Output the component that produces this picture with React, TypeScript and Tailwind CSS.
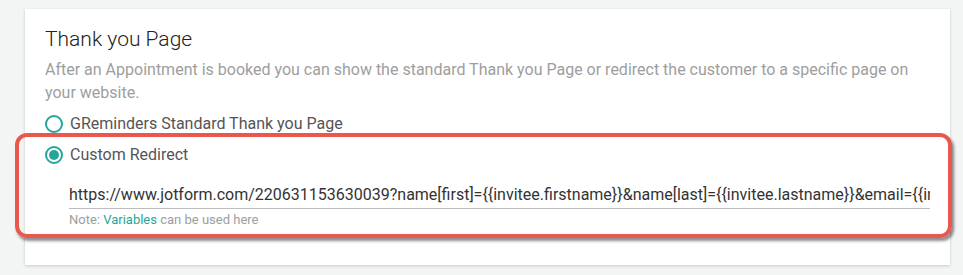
const url =
  "https://www.jotform.com/220631153630039?name[first]={{invitee.firstname}}&name[last]={{invitee.lastname}}&email={{invitee.email}}";

function Radio({ checked, label }: { checked: boolean; label: string }) {
  return (
    <label className="flex h-[22px] items-center gap-[7px]">
      <span className="flex h-[18px] w-[18px] items-center justify-center rounded-full border-2 border-[#26a69a]">
        {checked && <span className="h-[10px] w-[10px] rounded-full bg-[#26a69a]" />}
      </span>
      <span className="text-[16px] leading-[22px] text-[#555]">{label}</span>
    </label>
  );
}

export default function App() {
  return (
    <div
      className="relative h-[275px] w-[963px] overflow-hidden bg-[#f3f4f4] pl-[25px] pt-[9px]"
      style={{ fontFamily: "Roboto, 'Liberation Sans', sans-serif" }}
    >
      <div className="h-[256px] w-[925px] bg-white pl-[20px] pr-[20px] pt-[18px] shadow-[0_1px_3px_rgba(0,0,0,0.18)]">
        <h2 className="text-[21px] font-light leading-[24px] text-[#222]">Thank you Page</h2>
        <p className="mt-[7px] text-[16px] leading-[23px] text-[#9e9e9e]">
          After an Appointment is booked you can show the standard Thank you Page or redirect the customer to a specific
          page on your website.
        </p>
        <div className="mt-[9px]">
          <Radio checked={false} label="GReminders Standard Thank you Page" />
        </div>
        <div className="mt-[9px]">
          <Radio checked label="Custom Redirect" />
        </div>
        <div className="ml-[24px] mt-[16px] w-[861px]">
          <input
            readOnly
            value={url}
            className="block h-[27px] w-full border-b border-[#bdbdbd] bg-transparent pb-[2px] text-[16px] leading-[24px] text-[#333] outline-none"
          />
          <div className="mt-[2px] text-[13px] leading-[17px] text-[#9e9e9e]">
            Note: <span className="text-[#26a69a]">Variables</span> can be used here
          </div>
        </div>
      </div>
      <div className="pointer-events-none absolute left-[15px] top-[133px] h-[105px] w-[937px] rounded-[12px] border-4 border-[#e9574d] shadow-[2px_3px_3px_rgba(0,0,0,0.45)]" />
    </div>
  );
}
